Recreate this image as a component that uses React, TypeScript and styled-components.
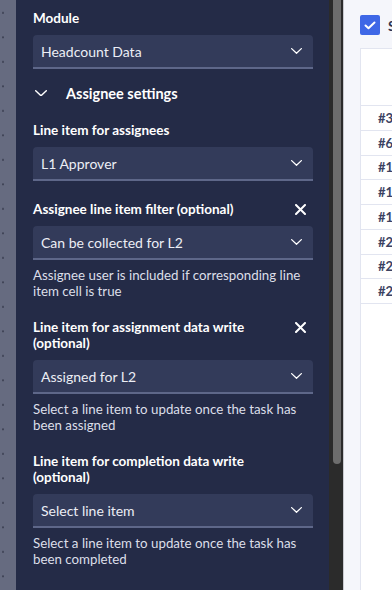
import React from "react";
import styled, { createGlobalStyle } from "styled-components";

const Global = createGlobalStyle`
  html, body { margin: 0; padding: 0; background: #f5f6fb; overflow: hidden; }
  * { box-sizing: border-box; }
`;

const Screen = styled.div`
  display: flex;
  width: 392px;
  height: 590px;
  overflow: hidden;
  font-family: Lato, "Liberation Sans", sans-serif;
`;

const Rail = styled.div`
  flex: 0 0 16px;
  background-color: #666b80;
  background-image: radial-gradient(circle at 3px 12px, #3f4356 0.8px, transparent 1.2px);
  background-size: 16px 24.5px;
  background-position: 0 1px;
`;

const Panel = styled.div`
  flex: 0 0 313px;
  background: #242b47;
  padding: 10px 16px 0 17px;
  display: flex;
  flex-direction: column;
  color: #ffffff;
`;

const Track = styled.div`
  flex: 0 0 15px;
  background: #2b2b2b;
  padding-left: 4px;
  border-right: 1px solid #c9cad0;
`;

const Thumb = styled.div`
  width: 8px;
  height: 464px;
  background: #6d6d6d;
  border-radius: 0 0 4px 4px;
`;

const Main = styled.div`
  flex: 1;
  background: #f5f6fb;
  padding: 15px 0 0 16px;
  display: flex;
  flex-direction: column;
  min-width: 0;
`;

const CheckRow = styled.div`
  display: flex;
  align-items: center;
  gap: 8px;
  height: 20px;
  white-space: nowrap;
  font-size: 14px;
  font-weight: 700;
  color: #2c3350;
`;

const CheckBox = styled.div`
  flex: 0 0 20px;
  height: 20px;
  border-radius: 2px;
  background: #3e67e6;
  display: flex;
  align-items: center;
  justify-content: center;
`;

const Table = styled.div`
  margin-top: 13px;
  flex: 1;
  background: #ffffff;
  border-left: 1px solid #e2e5f0;
  border-top: 1px solid #e2e5f0;
  display: flex;
  flex-direction: column;
`;

const HeaderRow = styled.div`
  height: 56px;
`;

const Row = styled.div`
  height: 24.75px;
  border-top: 1px solid #e2e5f0;
  display: flex;
  align-items: center;
  padding-left: 17px;
  font-size: 13px;
  font-weight: 700;
  color: #3b4262;
  white-space: nowrap;
`;

const LastLine = styled.div`
  border-top: 1px solid #e2e5f0;
`;

const Field = styled.div<{ $gap?: number }>`
  display: flex;
  flex-direction: column;
  margin-top: ${(p) => p.$gap ?? 0}px;
`;

const LabelRow = styled.div`
  display: flex;
  align-items: flex-start;
  justify-content: space-between;
  margin-bottom: 9px;
`;

const Label = styled.div`
  font-size: 13.5px;
  line-height: 16px;
  font-weight: 700;
  color: #ffffff;
  max-width: 255px;
`;

const CloseBtn = styled.div`
  width: 11px;
  height: 16px;
  margin-right: 7px;
  display: flex;
  align-items: center;
`;

const Select = styled.div`
  height: 34px;
  background: #333b5a;
  border-bottom: 2px solid #5e6789;
  border-radius: 4px 4px 0 0;
  display: flex;
  align-items: center;
  justify-content: space-between;
  padding: 0 11px 0 8px;
  font-size: 14px;
  color: #eceef5;
`;

const Helper = styled.div`
  margin-top: 7px;
  font-size: 13.3px;
  line-height: 16px;
  color: #dcdfe9;
`;

const Toggle = styled.div`
  margin-top: 12px;
  height: 24px;
  display: flex;
  align-items: center;
  padding-left: 2px;
  gap: 19px;
  font-size: 14.5px;
  font-weight: 700;
  color: #ffffff;
`;

const Chevron = ({ w = 11 }: { w?: number }) => (
  <svg width={w} height={w * 0.55} viewBox="0 0 12 6.6" fill="none">
    <path d="M0.7 0.7 L6 5.8 L11.3 0.7" stroke="#ffffff" strokeWidth="1.4" strokeLinecap="round" strokeLinejoin="round" />
  </svg>
);

const XIcon = () => (
  <svg width="11" height="11" viewBox="0 0 11 11" fill="none">
    <path d="M1 1 L10 10 M10 1 L1 10" stroke="#ffffff" strokeWidth="2" strokeLinecap="round" />
  </svg>
);

const Check = () => (
  <svg width="12" height="9" viewBox="0 0 12 9" fill="none">
    <path d="M1.5 4.5 L4.5 7.3 L10.5 1.5" stroke="#ffffff" strokeWidth="2" strokeLinecap="round" strokeLinejoin="round" />
  </svg>
);

type FieldProps = {
  label: React.ReactNode;
  value: string;
  helper?: React.ReactNode;
  closable?: boolean;
  gap?: number;
};

const FormField = ({ label, value, helper, closable, gap }: FieldProps) => (
  <Field $gap={gap}>
    <LabelRow>
      <Label>{label}</Label>
      {closable && (
        <CloseBtn>
          <XIcon />
        </CloseBtn>
      )}
    </LabelRow>
    <Select>
      <span>{value}</span>
      <Chevron />
    </Select>
    {helper && <Helper>{helper}</Helper>}
  </Field>
);

const rows = ["#31", "#62", "#14", "#15", "#17", "#21", "#23", "#28"];

export default function App() {
  return (
    <>
      <Global />
      <Screen>
        <Rail />
        <Panel>
          <FormField label="Module" value="Headcount Data" />
          <Toggle>
            <Chevron w={12} />
            <span>Assignee settings</span>
          </Toggle>
          <FormField label="Line item for assignees" value="L1 Approver" gap={17} />
          <FormField
            gap={20}
            closable
            label="Assignee line item filter (optional)"
            value="Can be collected for L2"
            helper={<>Assignee user is included if corresponding line<br />item cell is true</>}
          />
          <FormField
            gap={20}
            closable
            label={<>Line item for assignment data write<br />(optional)</>}
            value="Assigned for L2"
            helper={<>Select a line item to update once the task has<br />been assigned</>}
          />
          <FormField
            gap={20}
            label={<>Line item for completion data write<br />(optional)</>}
            value="Select line item"
            helper={<>Select a line item to update once the task has<br />been completed</>}
          />
        </Panel>
        <Track>
          <Thumb />
        </Track>
        <Main>
          <CheckRow>
            <CheckBox>
              <Check />
            </CheckBox>
            <span>Select all</span>
          </CheckRow>
          <Table>
            <HeaderRow />
            {rows.map((r, i) => (
              <Row key={i}>{r}</Row>
            ))}
            <LastLine />
          </Table>
        </Main>
      </Screen>
    </>
  );
}
